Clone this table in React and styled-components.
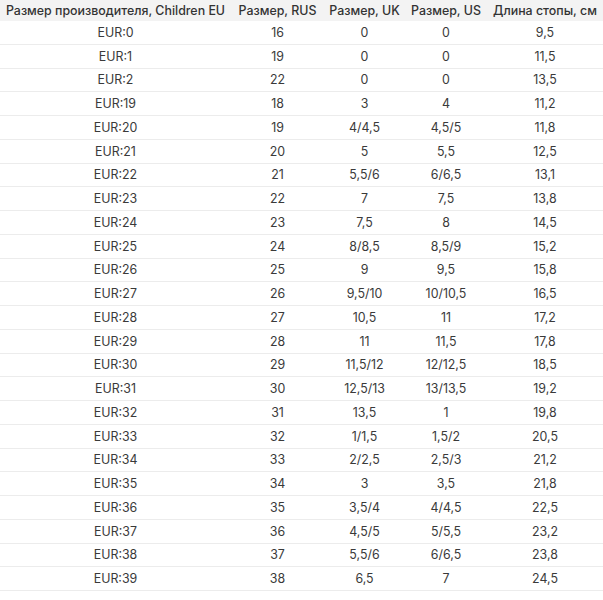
import React from "react";
import styled, { createGlobalStyle } from "styled-components";

const Global = createGlobalStyle`
  html, body { margin: 0; padding: 0; background: #fff; }
  body { font-family: Inter, "Noto Sans", sans-serif; color: #333; }
`;

const cols = "231px 93px 81px 82px 116px";

const Table = styled.div`
  width: 603px;
  display: flex;
  flex-direction: column;
`;

const HeadRow = styled.div`
  display: grid;
  grid-template-columns: ${cols};
  height: 21px;
  background: #f3f3f3;
  align-items: center;
`;

const Row = styled.div`
  display: grid;
  grid-template-columns: ${cols};
  height: 23.75px;
  box-sizing: border-box;
  border-bottom: 1px solid #ececec;
  align-items: center;
`;

const Th = styled.div`
  font-size: 12.4px;
  font-weight: 500;
  text-align: center;
  white-space: nowrap;
  color: #333;
`;

const Td = styled.div`
  font-size: 12.4px;
  text-align: center;
  white-space: nowrap;
  color: #3a3a3a;
`;

const headers = [
  "Размер производителя, Children EU",
  "Размер, RUS",
  "Размер, UK",
  "Размер, US",
  "Длина стопы, см",
];

const rows = [
  ["EUR:0", "16", "0", "0", "9,5"],
  ["EUR:1", "19", "0", "0", "11,5"],
  ["EUR:2", "22", "0", "0", "13,5"],
  ["EUR:19", "18", "3", "4", "11,2"],
  ["EUR:20", "19", "4/4,5", "4,5/5", "11,8"],
  ["EUR:21", "20", "5", "5,5", "12,5"],
  ["EUR:22", "21", "5,5/6", "6/6,5", "13,1"],
  ["EUR:23", "22", "7", "7,5", "13,8"],
  ["EUR:24", "23", "7,5", "8", "14,5"],
  ["EUR:25", "24", "8/8,5", "8,5/9", "15,2"],
  ["EUR:26", "25", "9", "9,5", "15,8"],
  ["EUR:27", "26", "9,5/10", "10/10,5", "16,5"],
  ["EUR:28", "27", "10,5", "11", "17,2"],
  ["EUR:29", "28", "11", "11,5", "17,8"],
  ["EUR:30", "29", "11,5/12", "12/12,5", "18,5"],
  ["EUR:31", "30", "12,5/13", "13/13,5", "19,2"],
  ["EUR:32", "31", "13,5", "1", "19,8"],
  ["EUR:33", "32", "1/1,5", "1,5/2", "20,5"],
  ["EUR:34", "33", "2/2,5", "2,5/3", "21,2"],
  ["EUR:35", "34", "3", "3,5", "21,8"],
  ["EUR:36", "35", "3,5/4", "4/4,5", "22,5"],
  ["EUR:37", "36", "4,5/5", "5/5,5", "23,2"],
  ["EUR:38", "37", "5,5/6", "6/6,5", "23,8"],
  ["EUR:39", "38", "6,5", "7", "24,5"],
];

export default function App() {
  return (
    <>
      <Global />
      <Table>
        <HeadRow>
          {headers.map((h) => (
            <Th key={h}>{h}</Th>
          ))}
        </HeadRow>
        {rows.map((r) => (
          <Row key={r[0]}>
            {r.map((c, i) => (
              <Td key={i}>{c}</Td>
            ))}
          </Row>
        ))}
      </Table>
    </>
  );
}
